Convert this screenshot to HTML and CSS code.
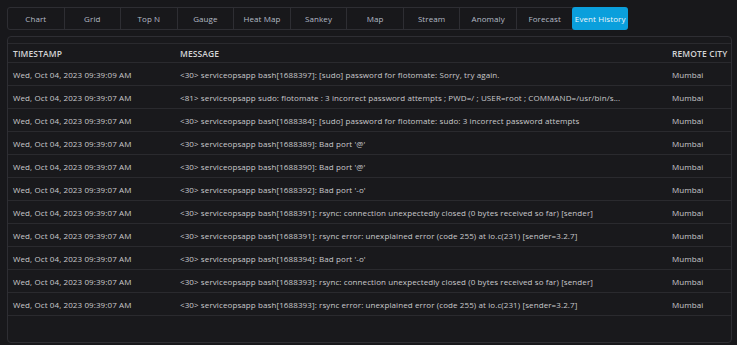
FILE: index.html
```html
<!DOCTYPE html>
<html>
<head>
<meta charset="utf-8">
<link rel="stylesheet" href="styles.css">
</head>
<body>
<div class="page">
  <nav class="tabs">
    <div class="tab">Chart</div>
    <div class="tab">Grid</div>
    <div class="tab">Top N</div>
    <div class="tab">Gauge</div>
    <div class="tab">Heat Map</div>
    <div class="tab">Sankey</div>
    <div class="tab">Map</div>
    <div class="tab">Stream</div>
    <div class="tab">Anomaly</div>
    <div class="tab">Forecast</div>
    <div class="tab active">Event History</div>
  </nav>
  <section class="panel">
    <div class="row head">
      <div class="cell">TIMESTAMP</div>
      <div class="cell">MESSAGE</div>
      <div class="cell">REMOTE CITY</div>
    </div>
    <div class="row"><div class="cell">Wed, Oct 04, 2023 09:39:09 AM</div><div class="cell">&lt;30&gt; serviceopsapp bash[1688397]: [sudo] password for flotomate: Sorry, try again.</div><div class="cell">Mumbai</div></div>
    <div class="row"><div class="cell">Wed, Oct 04, 2023 09:39:07 AM</div><div class="cell">&lt;81&gt; serviceopsapp sudo: flotomate : 3 incorrect password attempts ; PWD=/ ; USER=root ; COMMAND=/usr/bin/s...</div><div class="cell">Mumbai</div></div>
    <div class="row"><div class="cell">Wed, Oct 04, 2023 09:39:07 AM</div><div class="cell">&lt;30&gt; serviceopsapp bash[1688384]: [sudo] password for flotomate: sudo: 3 incorrect password attempts</div><div class="cell">Mumbai</div></div>
    <div class="row"><div class="cell">Wed, Oct 04, 2023 09:39:07 AM</div><div class="cell">&lt;30&gt; serviceopsapp bash[1688389]: Bad port '@'</div><div class="cell">Mumbai</div></div>
    <div class="row"><div class="cell">Wed, Oct 04, 2023 09:39:07 AM</div><div class="cell">&lt;30&gt; serviceopsapp bash[1688390]: Bad port '@'</div><div class="cell">Mumbai</div></div>
    <div class="row"><div class="cell">Wed, Oct 04, 2023 09:39:07 AM</div><div class="cell">&lt;30&gt; serviceopsapp bash[1688392]: Bad port '-o'</div><div class="cell">Mumbai</div></div>
    <div class="row"><div class="cell">Wed, Oct 04, 2023 09:39:07 AM</div><div class="cell">&lt;30&gt; serviceopsapp bash[1688391]: rsync: connection unexpectedly closed (0 bytes received so far) [sender]</div><div class="cell">Mumbai</div></div>
    <div class="row"><div class="cell">Wed, Oct 04, 2023 09:39:07 AM</div><div class="cell">&lt;30&gt; serviceopsapp bash[1688391]: rsync error: unexplained error (code 255) at io.c(231) [sender=3.2.7]</div><div class="cell">Mumbai</div></div>
    <div class="row"><div class="cell">Wed, Oct 04, 2023 09:39:07 AM</div><div class="cell">&lt;30&gt; serviceopsapp bash[1688394]: Bad port '-o'</div><div class="cell">Mumbai</div></div>
    <div class="row"><div class="cell">Wed, Oct 04, 2023 09:39:07 AM</div><div class="cell">&lt;30&gt; serviceopsapp bash[1688393]: rsync: connection unexpectedly closed (0 bytes received so far) [sender]</div><div class="cell">Mumbai</div></div>
    <div class="row"><div class="cell">Wed, Oct 04, 2023 09:39:07 AM</div><div class="cell">&lt;30&gt; serviceopsapp bash[1688393]: rsync error: unexplained error (code 255) at io.c(231) [sender=3.2.7]</div><div class="cell">Mumbai</div></div>
  </section>
</div>
</body>
</html>
```
FILE: styles.css
```css
html, body {
  margin: 0;
  padding: 0;
  background: #18181b;
  font-family: "Open Sans", "Liberation Sans", sans-serif;
  color: #c9c9cc;
}
.page {
  padding: 7px 5px 0 7px;
  height: 345px;
  box-sizing: border-box;
}
.tabs {
  display: flex;
  width: 621px;
  height: 23px;
  box-sizing: border-box;
  border: 1px solid #2e2e33;
  border-radius: 3px;
}
.tab {
  flex: 1 1 0;
  display: flex;
  align-items: center;
  justify-content: center;
  font-size: 8px;
  letter-spacing: 0.1px;
  color: #b4bac6;
  border-left: 1px solid #2e2e33;
}
.tab:first-child {
  border-left: none;
}
.tab.active {
  background: #0a9fdc;
  color: #eef6fb;
  border-radius: 3px;
  border-left: none;
  margin: -1px -1px -1px 0;
}
.panel {
  margin-top: 6px;
  height: 307px;
  box-sizing: border-box;
  border: 1px solid #2e2e33;
  border-radius: 4px;
  padding-top: 6px;
  background: #19191c;
}
.row {
  display: grid;
  grid-template-columns: 167px 492px 1fr;
  height: 23px;
  box-sizing: border-box;
  border-bottom: 1px solid #2a2a2e;
  align-items: center;
  font-size: 8px;
  letter-spacing: 0.1px;
}
.row.head {
  height: 20px;
  border-top: 1px solid #2a2a2e;
  font-weight: 600;
  font-size: 8.5px;
  letter-spacing: 0.1px;
  color: #d4d4d6;
}
.cell {
  padding-left: 5px;
  white-space: nowrap;
  overflow: hidden;
}
```
